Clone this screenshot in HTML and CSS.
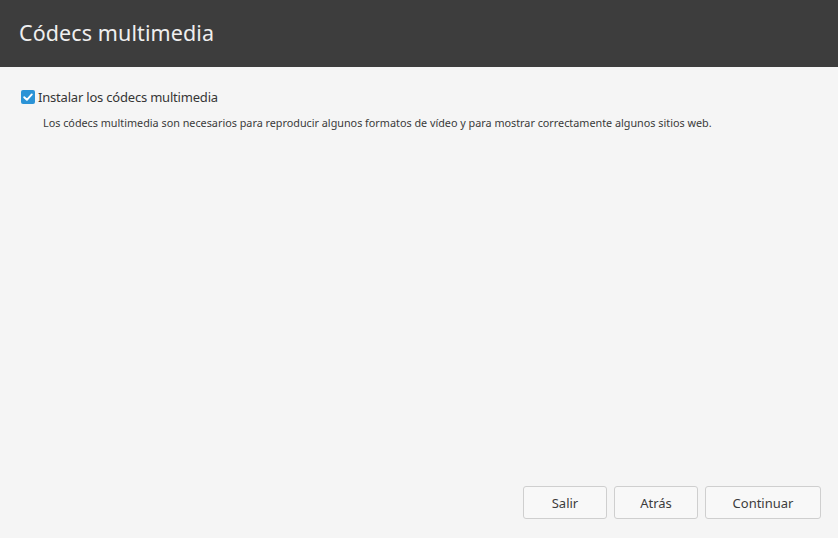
FILE: index.html
```html
<!DOCTYPE html>
<html lang="es">
<head>
<meta charset="utf-8">
<title>Códecs multimedia</title>
<link rel="stylesheet" href="styles.css">
</head>
<body>
<div class="window">
  <header class="header">
    <h1 class="title">Códecs multimedia</h1>
  </header>
  <main class="content">
    <label class="check-row">
      <span class="checkbox">
        <svg viewBox="0 0 14 14" width="14" height="14"><path d="M3.2 7.2 L5.9 9.8 L10.8 4.4" fill="none" stroke="#fff" stroke-width="1.9" stroke-linecap="round" stroke-linejoin="round"/></svg>
      </span>
      <span class="check-label">Instalar los códecs multimedia</span>
    </label>
    <p class="desc">Los códecs multimedia son necesarios para reproducir algunos formatos de vídeo y para mostrar correctamente algunos sitios web.</p>
  </main>
  <footer class="footer">
    <button class="btn btn-sm">Salir</button>
    <button class="btn btn-sm">Atrás</button>
    <button class="btn btn-lg">Continuar</button>
  </footer>
</div>
</body>
</html>
```
FILE: styles.css
```css
html, body {
  margin: 0;
  padding: 0;
  height: 100%;
}
body {
  font-family: "Noto Sans", "DejaVu Sans", sans-serif;
  background: #f5f5f5;
  color: #3c3c3c;
}
.window {
  display: flex;
  flex-direction: column;
  height: 100vh;
}
.header {
  background: #3d3d3d;
  height: 67px;
  display: flex;
  align-items: center;
  padding-left: 19px;
  box-sizing: border-box;
  flex-shrink: 0;
}
.title {
  margin: 0;
  font-weight: normal;
  font-size: 21.5px;
  color: #efefef;
  letter-spacing: 0.1px;
  padding-bottom: 2px;
}
.content {
  flex: 1;
  padding: 21px 0 0 21px;
}
.check-row {
  display: flex;
  align-items: center;
  gap: 3px;
}
.checkbox {
  width: 14px;
  height: 14px;
  border-radius: 2px;
  background: #2b93d6;
  display: flex;
  align-items: center;
  justify-content: center;
}
.checkbox svg {
  display: block;
}
.check-label {
  font-size: 13px;
  letter-spacing: -0.2px;
  color: #363636;
}
.desc {
  margin: 9px 0 0 22px;
  font-size: 10.8px;
  color: #3a3a3a;
}
.footer {
  display: flex;
  justify-content: flex-end;
  gap: 7px;
  padding: 0 17px 19px 0;
}
.btn {
  height: 33px;
  background: #f8f8f8;
  border: 1px solid #cfcfcf;
  border-radius: 3px;
  font-family: inherit;
  font-size: 13px;
  color: #3c3c3c;
  padding: 0;
  box-sizing: border-box;
}
.btn-sm { width: 84px; }
.btn-lg { width: 116px; }
```
